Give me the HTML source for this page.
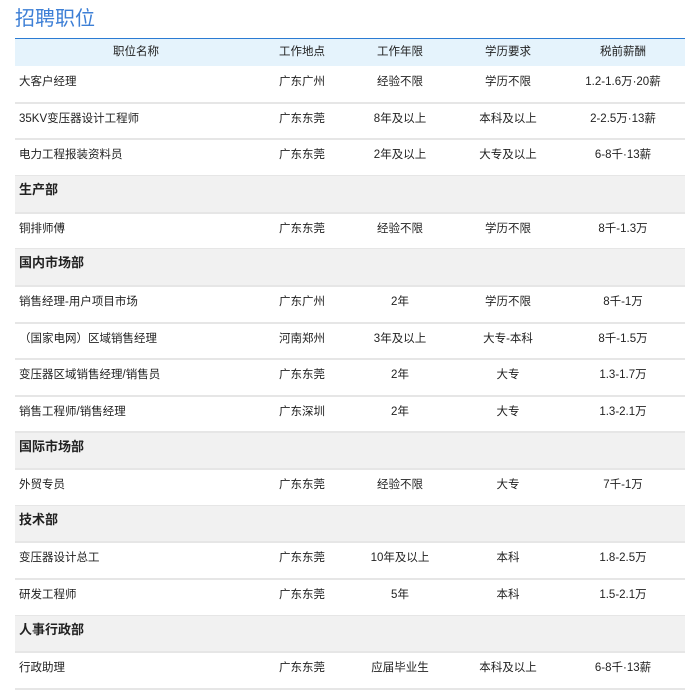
<!DOCTYPE html>
<html><head><meta charset="utf-8"><style>
body{margin:0;background:#fff;font-family:"Liberation Sans","Noto Sans CJK SC",sans-serif;color:#222;width:685px;height:690px;overflow:hidden;position:relative}
h1{position:absolute;left:15px;top:6px;margin:0;font-size:20px;font-weight:normal;color:#3d7fd6;line-height:26px}
.hl{position:absolute;left:15px;top:38px;width:670px;height:1px;background:#2b7bd3}
.r{position:absolute;left:15px;width:670px;box-sizing:border-box;border-bottom:2px solid #e6e6e6;font-size:11.5px}
.r div{position:absolute;top:0;text-align:center;white-space:nowrap}
.h{background:#e5f3fc;border-bottom:none}
.s{background:#f1f1f1;font-weight:bold;font-size:13px}
.c1{left:4px;text-align:left!important}
.c2{left:242px;width:90px}.c3{left:332px;width:106px}.c4{left:438px;width:110px}.c5{left:548px;width:120px}
</style></head><body>
<h1>招聘职位</h1>
<div class="hl"></div>
<div class="r h" style="top:39px;height:27px"><div class="c1" style="left:0;width:242px;text-align:center!important;line-height:27px">职位名称</div><div class="c2" style="line-height:27px">工作地点</div><div class="c3" style="line-height:27px">工作年限</div><div class="c4" style="line-height:27px">学历要求</div><div class="c5" style="line-height:27px">税前薪酬</div></div>
<div id="rows"></div>
<script>
var data=[
["大客户经理","广东广州","经验不限","学历不限","1.2-1.6万·20薪"],
["35KV变压器设计工程师","广东东莞","8年及以上","本科及以上","2-2.5万·13薪"],
["电力工程报装资料员","广东东莞","2年及以上","大专及以上","6-8千·13薪"],
["生产部"],
["铜排师傅","广东东莞","经验不限","学历不限","8千-1.3万"],
["国内市场部"],
["销售经理-用户项目市场","广东广州","2年","学历不限","8千-1万"],
["（国家电网）区域销售经理","河南郑州","3年及以上","大专-本科","8千-1.5万"],
["变压器区域销售经理/销售员","广东东莞","2年","大专","1.3-1.7万"],
["销售工程师/销售经理","广东深圳","2年","大专","1.3-2.1万"],
["国际市场部"],
["外贸专员","广东东莞","经验不限","大专","7千-1万"],
["技术部"],
["变压器设计总工","广东东莞","10年及以上","本科","1.8-2.5万"],
["研发工程师","广东东莞","5年","本科","1.5-2.1万"],
["人事行政部"],
["行政助理","广东东莞","应届毕业生","本科及以上","6-8千·13薪"]];
var h="",H=36.65;
data.forEach(function(d,i){var t=66+i*H;
if(d.length==1){h+='<div class="r s" style="top:'+t+'px;height:'+(H+1)+'px"><div class="c1" style="top:3px">'+d[0]+'</div></div>';}
else{h+='<div class="r" style="top:'+t+'px;height:'+(H+1)+'px">';
for(var j=0;j<5;j++)h+='<div class="c'+(j+1)+'" style="top:7px">'+d[j]+'</div>';h+='</div>';}});
document.getElementById('rows').innerHTML=h;
</script>
</body></html>
